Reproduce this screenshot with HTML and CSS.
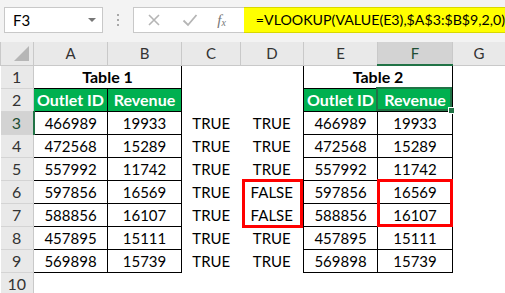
FILE: index.html
```html
<!DOCTYPE html>
<html>
<head>
    <title>VLOOKUP with VALUE</title>
    <link rel="stylesheet" href="styles.css">
</head>
<body>
    <div class="toolbar">
        <div class="namebox">
            <span>F3</span>
            <span class="arrow"></span>
        </div>
        <div class="dots"><span></span><span></span><span></span></div>
        <div class="fbar">
            <svg class="icon" width="14" height="14" viewBox="0 0 14 14"><path d="M2 2 L12 12 M12 2 L2 12" stroke="#b5b5b5" stroke-width="1.6" fill="none"/></svg>
            <svg class="icon" width="16" height="14" viewBox="0 0 16 14"><path d="M1.5 7.5 L6 12 L14.5 2" stroke="#b5b5b5" stroke-width="1.8" fill="none"/></svg>
            <span class="fx">f<sub>x</sub></span>
        </div>
        <div class="formula">=VLOOKUP(VALUE(E3),$A$3:$B$9,2,0)</div>
    </div>

    <div class="sheet">
        <table class="grid">
            <colgroup>
                <col class="c-row">
                <col class="c-a">
                <col class="c-b">
                <col class="c-c">
                <col class="c-d">
                <col class="c-e">
                <col class="c-f">
                <col class="c-g">
            </colgroup>
            <tr class="head">
                <th class="corner"><span class="tri"></span></th>
                <th>A</th>
                <th>B</th>
                <th>C</th>
                <th>D</th>
                <th>E</th>
                <th class="sel">F</th>
                <th>G</th>
            </tr>
            <tr>
                <th class="rn">1</th>
                <td class="box title" colspan="2">Table 1</td>
                <td></td>
                <td></td>
                <td class="box title" colspan="2">Table 2</td>
                <td></td>
            </tr>
            <tr>
                <th class="rn">2</th>
                <td class="box green">Outlet ID</td>
                <td class="box green">Revenue</td>
                <td></td>
                <td></td>
                <td class="box green">Outlet ID</td>
                <td class="box green">Revenue</td>
                <td></td>
            </tr>
            <tr>
                <th class="rn sel-row">3</th>
                <td class="box">466989</td>
                <td class="box">19933</td>
                <td>TRUE</td>
                <td>TRUE</td>
                <td class="box">466989</td>
                <td class="box">19933</td>
                <td></td>
            </tr>
            <tr>
                <th class="rn">4</th>
                <td class="box">472568</td>
                <td class="box">15289</td>
                <td>TRUE</td>
                <td>TRUE</td>
                <td class="box">472568</td>
                <td class="box">15289</td>
                <td></td>
            </tr>
            <tr>
                <th class="rn">5</th>
                <td class="box">557992</td>
                <td class="box">11742</td>
                <td>TRUE</td>
                <td>TRUE</td>
                <td class="box">557992</td>
                <td class="box">11742</td>
                <td></td>
            </tr>
            <tr>
                <th class="rn">6</th>
                <td class="box">597856</td>
                <td class="box">16569</td>
                <td>TRUE</td>
                <td>FALSE</td>
                <td class="box">597856</td>
                <td class="box">16569</td>
                <td></td>
            </tr>
            <tr>
                <th class="rn">7</th>
                <td class="box">588856</td>
                <td class="box">16107</td>
                <td>TRUE</td>
                <td>FALSE</td>
                <td class="box">588856</td>
                <td class="box">16107</td>
                <td></td>
            </tr>
            <tr>
                <th class="rn">8</th>
                <td class="box">457895</td>
                <td class="box">15111</td>
                <td>TRUE</td>
                <td>TRUE</td>
                <td class="box">457895</td>
                <td class="box">15111</td>
                <td></td>
            </tr>
            <tr>
                <th class="rn">9</th>
                <td class="box">569898</td>
                <td class="box">15739</td>
                <td>TRUE</td>
                <td>TRUE</td>
                <td class="box">569898</td>
                <td class="box">15739</td>
                <td></td>
            </tr>
            <tr>
                <th class="rn">10</th>
                <td></td>
                <td></td>
                <td></td>
                <td></td>
                <td></td>
                <td></td>
                <td></td>
            </tr>
        </table>

        <!-- active cell and the red marks drawn over the grid -->
        <div class="active"><span class="handle"></span></div>
        <div class="mark mark-d"></div>
        <div class="mark mark-f"></div>
    </div>
</body>
</html>
```

FILE: styles.css
```css
body {
    margin: 0;
    width: 505px;
    height: 293px;
    overflow: hidden;
    background-color: #ffffff;
    font-family: 'Lato', 'Liberation Sans', sans-serif;
    color: #000000;
}
.toolbar {
    display: flex;
    align-items: flex-start;
    height: 42px;
    padding-top: 7px;
    box-sizing: border-box;
    background-color: #f3f3f3;
}
.namebox {
    display: flex;
    align-items: center;
    justify-content: space-between;
    margin-left: 4px;
    width: 101px;
    height: 26px;
    box-sizing: border-box;
    padding: 0 6px 0 8px;
    background-color: #ffffff;
    border: 1px solid #c8c8c8;
    font-size: 15px;
}
.arrow {
    width: 0;
    height: 0;
    border-left: 4px solid transparent;
    border-right: 4px solid transparent;
    border-top: 4px solid #777777;
}
.dots {
    width: 31px;
    height: 26px;
    display: flex;
    flex-direction: column;
    align-items: center;
    justify-content: center;
    gap: 3px;
}
.dots span {
    width: 2px;
    height: 2px;
    background-color: #a8a8a8;
}
.fbar {
    display: flex;
    align-items: center;
    width: 113px;
    height: 26px;
    box-sizing: border-box;
    padding-left: 13px;
    gap: 21px;
    background-color: #ffffff;
    border: 1px solid #c8c8c8;
    border-right: none;
}
.fx {
    font-family: 'Liberation Serif', serif;
    font-style: italic;
    font-size: 15px;
    color: #777777;
    margin-left: -2px;
}
.fx sub {
    font-size: 10px;
    vertical-align: -1px;
}
.formula {
    flex: 1;
    height: 26px;
    box-sizing: border-box;
    padding-left: 12px;
    line-height: 24px;
    background-color: #ffff00;
    border-top: 1px solid #d8d800;
    border-bottom: 1px solid #d8d800;
    font-size: 14.2px;
    white-space: nowrap;
}
.sheet {
    position: relative;
}
.grid {
    border-collapse: collapse;
    table-layout: fixed;
    width: 505px;
    font-size: 15px;
}
.c-row { width: 33px; }
.c-a { width: 74px; }
.c-b { width: 74px; }
.c-c { width: 59px; }
.c-d { width: 63px; }
.c-e { width: 74px; }
.c-f { width: 75px; }
.c-g { width: 53px; }
.grid tr {
    height: 23px;
}
.grid td, .grid th {
    padding: 0;
    text-align: center;
    white-space: nowrap;
    overflow: hidden;
}
.head {
    height: 24px;
}
.head th {
    font-weight: normal;
    color: #333333;
    background-color: #e9e9e9;
    border-left: 1px solid #c9c9c9;
    border-right: 1px solid #c9c9c9;
    border-bottom: 1px solid #c9c9c9;
}
.head th.sel {
    background-color: #d3d3d3;
    border-bottom: 2px solid #217346;
    color: #1e4e33;
}
.corner {
    position: relative;
}
.tri {
    position: absolute;
    right: 4px;
    bottom: 4px;
    width: 0;
    height: 0;
    border-left: 15px solid transparent;
    border-bottom: 15px solid #b6b6b6;
}
.rn {
    font-weight: normal;
    font-size: 16px;
    color: #333333;
    background-color: #e9e9e9;
    border-right: 1px solid #c9c9c9;
    border-bottom: 1px solid #d4d4d4;
}
.rn.sel-row {
    background-color: #d3d3d3;
    border-right: 2px solid #217346;
    color: #1e4e33;
}
.box {
    border: 1px solid #000000;
}
.title {
    font-weight: bold;
    font-size: 16px;
}
.green {
    background-color: #00b050;
    color: #ffffff;
    font-weight: bold;
    font-size: 16px;
}
.active {
    position: absolute;
    left: 376px;
    top: 45px;
    width: 76px;
    height: 24px;
    box-sizing: border-box;
    border: 2px solid #217346;
}
.handle {
    position: absolute;
    right: -5px;
    bottom: -5px;
    width: 5px;
    height: 5px;
    background-color: #217346;
    border: 1px solid #ffffff;
}
.mark {
    position: absolute;
    box-sizing: border-box;
    border: 3px solid #ff0000;
}
.mark-d {
    left: 242px;
    top: 137px;
    width: 61px;
    height: 49px;
}
.mark-f {
    left: 377px;
    top: 137px;
    width: 76px;
    height: 48px;
}
```
